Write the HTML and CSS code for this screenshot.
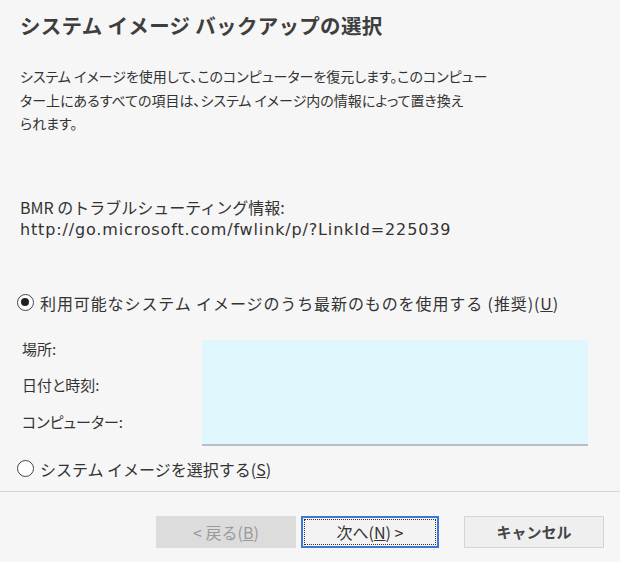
FILE: index.html
```html
<!DOCTYPE html>
<html lang="ja">
<head>
<meta charset="utf-8">
<link rel="stylesheet" href="styles.css">
</head>
<body>
<div class="page">
  <div class="content">
    <h1 class="title">システム イメージ バックアップの選択</h1>
    <p class="desc">システム イメージを使用して、このコンピューターを復元します。このコンピュー<br>ター上にあるすべての項目は、システム イメージ内の情報によって置き換え<br>られます。</p>
    <p class="bmr">BMR のトラブルシューティング情報:<br><span class="url">http://go.microsoft.com/fwlink/p/?LinkId=225039</span></p>
    <div class="radio radio-first">
      <span class="circle checked"></span>
      <span class="wide">利用可能なシステム イメージのうち最新のものを使用する (推奨)(<u>U</u>)</span>
    </div>
    <div class="details">
      <div class="labels">
        <span>場所:</span>
        <span>日付と時刻:</span>
        <span>コンピューター:</span>
      </div>
      <div class="infobox"></div>
    </div>
    <div class="radio radio-second">
      <span class="circle"></span>
      <span>システム イメージを選択する(<u>S</u>)</span>
    </div>
  </div>
  <div class="footer">
    <button class="btn disabled">&lt; 戻る(<u>B</u>)</button>
    <button class="btn primary">次へ(<u>N</u>) &gt;</button>
    <button class="btn cancel">キャンセル</button>
  </div>
</div>
</body>
</html>
```
FILE: styles.css
```css
html, body {
  margin: 0;
  padding: 0;
}
body {
  background: #f6f6f6;
  font-family: "Noto Sans CJK JP", "Noto Sans", sans-serif;
  color: #3c3c3c;
}
.page {
  width: 620px;
  height: 562px;
  display: flex;
  flex-direction: column;
  overflow: hidden;
}
.content {
  padding: 0 20px;
}
.title {
  margin: 0;
  padding-top: 11px;
  font-size: 20.5px;
  line-height: 28px;
  font-weight: 700;
  color: #3e3e3e;
  letter-spacing: 0.3px;
}
.desc {
  margin: 26px 0 0;
  font-size: 14px;
  line-height: 23.5px;
  color: #333;
  font-feature-settings: "palt";
}
.bmr {
  margin: 61px 0 0;
  font-size: 16px;
  line-height: 21px;
  color: #333;
}
.url {
  font-family: "DejaVu Sans", "Noto Sans", sans-serif;
  font-size: 16px;
  letter-spacing: 0.85px;
}
.radio {
  display: flex;
  align-items: center;
  gap: 6px;
  height: 22px;
  font-size: 16px;
  color: #333;
  margin-left: -3px;
}
.wide {
  letter-spacing: 0.9px;
}
.radio-first {
  margin-top: 52px;
}
.circle {
  width: 17px;
  height: 17px;
  border: 1.5px solid #444;
  border-radius: 50%;
  box-sizing: border-box;
  position: relative;
  flex: none;
  background: #fff;
}
.circle.checked::after {
  content: "";
  position: absolute;
  left: 3px;
  top: 3px;
  width: 8px;
  height: 8px;
  border-radius: 50%;
  background: #222;
}
.details {
  display: flex;
  margin-top: 26px;
  height: 106px;
}
.labels {
  width: 180px;
  display: flex;
  flex-direction: column;
  gap: 14px;
  padding-left: 2px;
  margin-top: -2px;
  font-size: 15px;
  line-height: 22px;
  color: #333;
  font-feature-settings: "palt";
}
.labels span:nth-child(3) {
  margin-top: 1px;
}
.infobox {
  width: 386px;
  height: 104px;
  background: #e0f7fd;
  border-bottom: 2px solid #b9bfc3;
}
.radio-second {
  margin-top: 12px;
}
.footer {
  margin-top: 11px;
  border-top: 1px solid #d6d6d6;
  display: flex;
  justify-content: flex-end;
  padding: 24px 16px 0 0;
}
.btn {
  height: 32px;
  width: 140px;
  box-sizing: border-box;
  font-family: "Noto Sans CJK JP", "Noto Sans", sans-serif;
  font-size: 16px;
  background: #efefef;
  border: 1px solid #d4d4d4;
  color: #333;
  padding: 0;
}
.btn.disabled {
  background: #dcdcdc;
  border-color: #dcdcdc;
  color: #9a9a9a;
}
.btn.primary {
  margin-left: 5px;
  width: 138px;
  background: #f3f3f3;
  border: 2px solid #3c78d8;
  outline: 1px dotted #333;
  outline-offset: -4px;
}
.btn.cancel {
  margin-left: 25px;
  font-size: 15px;
  font-weight: 700;
  color: #444;
}
```
